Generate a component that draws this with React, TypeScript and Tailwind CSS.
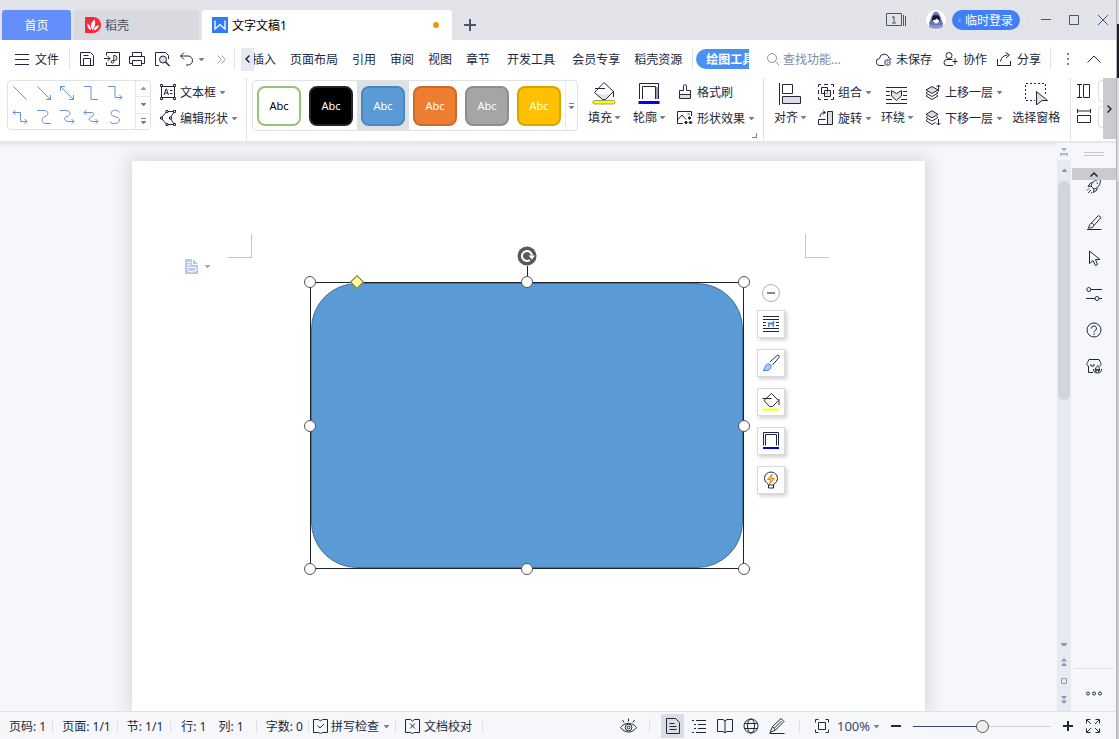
import React from "react";

type IconProps = { className?: string; box?: string; children: React.ReactNode };

function Icon({ className = "size-4", box = "0 0 16 16", children }: IconProps) {
  return (
    <svg
      viewBox={box}
      className={`shrink-0 ${className}`}
      fill="none"
      stroke="currentColor"
      strokeWidth="1"
      aria-hidden="true"
    >
      {children}
    </svg>
  );
}

function Caret({ className = "text-[#76819c]" }: { className?: string }) {
  return (
    <svg viewBox="0 0 5 3" className={`h-[3px] w-[5px] shrink-0 ${className}`} aria-hidden="true">
      <path d="M0 0h5v.6L3 3H2L0 .6z" fill="currentColor" />
    </svg>
  );
}

function Sep({ className }: { className: string }) {
  return <span className={`w-px shrink-0 bg-[#dfe1e6] ${className}`} />;
}

const icons = {
  save: (
    <Icon>
      <path d="M1.500 1.500h10l3 3v10h-13zM4.500 14.500v-7h7v7M4.500 4.500h5" />
    </Icon>
  ),
  exportPdf: (
    <Icon>
      <path d="M2.500 4.500v-3h13v13h-13v-3M0 7.500h6M3.500 5 6 7.500 3.500 10M9.500 4.500h1a2 2 0 0 1 0 5h-2a1.300 1.300 0 1 0 1.300 1.300V4.500" />
    </Icon>
  ),
  print: (
    <Icon>
      <path d="M3.500 5V1.500h9V5M3.500 12.500h-3v-7h15v7h-3M3.500 9.500h9v5h-9z" />
    </Icon>
  ),
  preview: (
    <Icon>
      <path d="M5 14.500H1.500v-13h10l3 3V8" />
      <circle cx="9" cy="8.500" r="3.500" fill="#dcdde6" />
      <path d="m11.500 11 4 4" strokeWidth="1.500" />
    </Icon>
  ),
  undo: (
    <Icon>
      <path d="M5 1.500 1.500 5 5 8.500M1.500 5H9a4.500 4.500 0 0 1 0 9H7" />
    </Icon>
  ),
  textBox: (
    <Icon>
      <path d="M2 2.500h12M2 13.500h12M1.500 2v12M14.500 2v12" />
      <path d="M.5.5h2v2h-2zM13.500.5h2v2h-2zM.5 13.500h2v2h-2zM13.500 13.500h2v2h-2z" fill="#fff" />
      <path d="m4 11 2-6h.5l2 6M5 9h3M10 6.500h2.500M10 9.500h2.500" />
    </Icon>
  ),
  editShape: (
    <Icon>
      <path d="M7 1.500h7.500L10 8l4.500 6.500H7L1 8z" />
      <path d="M6 .5h2v2H6zM13.500.5h2v2h-2zM.5 7h2v2h-2zM9.500 7h2v2h-2zM6 13.500h2v2H6zM13.500 13.500h2v2h-2z" fill="#fff" />
    </Icon>
  ),
  painter: (
    <Icon>
      <path d="M6.500 6.500v-5l1.500-1 1.500 1v5h4v4h-11v-4z" />
      <path d="M2.500 10.500h11v4h-11z" fill="#dcdde6" />
    </Icon>
  ),
  effects: (
    <Icon>
      <path d="M6 13.500H.5V1.500h14V6M.5 10 5 5l4 4.500M10.500 4h2" />
      <path d="M12.500 6.500 14 8l-1.500 1.500L11 8zM9 11l1.500 1.500L9 14l-1.500-1.500zM13.500 11l1.500 1.500-1.500 1.500-1.500-1.500z" fill="#2b3148" />
    </Icon>
  ),
  group: (
    <Icon>
      <path d="M.5 3V.5H3M6 .5h4M13 .5h2.500V3M15.500 6v4M15.500 13v2.500H13M10 15.500H6M3 15.500H.5V13M.5 10V6" />
      <path d="M3.500 3.500h6v6h-6z" />
      <path d="M6.500 6.500h6v6h-6z" fill="#dcdde6" fillOpacity=".6" />
    </Icon>
  ),
  rotate: (
    <Icon>
      <path d="M9.500 1.500h5v13h-5z" fill="#dcdde6" />
      <path d="M7.500 9.500h-7v5h9M2 7c0-3 2-4.500 5-4.500M5 .5l2.500 2L5 4.500" />
    </Icon>
  ),
  up: (
    <Icon>
      <path d="m7 2.500 6 3.500-6 3.500L1 6z" fill="#dcdde6" />
      <path d="M2.500 8 1 9l6 3.500L13 9l-1.500-1M2.500 11 1 12l6 3.500 6-3.500-1.500-1M13.500 7.500V1M11.500 3l2-2 2 2" />
    </Icon>
  ),
  down: (
    <Icon>
      <path d="m7 .8 6 3.500-6 3.500-6-3.500z" fill="#dcdde6" />
      <path d="M2.500 6.500 1 7.500l6 3.500 6-3.500-1.500-1M2.500 9.500 1 10.500l6 4 3.500-2M13.500 9v6M11.500 13l2 2 2-2" />
    </Icon>
  ),
  cloud: (
    <Icon>
      <path d="M8 14.500H4a3.500 3.500 0 0 1-.5-7 4.700 4.700 0 0 1 9.300-.5 3 3 0 0 1 2.400 2" />
      <circle cx="11.500" cy="11.500" r="3.500" fill="#8d93a8" stroke="none" />
      <path d="m10 10 3 3M13 10l-3 3" stroke="#fff" />
    </Icon>
  ),
  collab: (
    <Icon>
      <circle cx="6" cy="4.500" r="3" />
      <path d="M9.500 8.500H4a3 3 0 0 0 0 6h6M12 7.500v6M9.500 10.500h5" />
    </Icon>
  ),
  share: (
    <Icon>
      <path d="M.5 8v6.500h13V10M3.500 10.500c.5-4 3-6 7-6.500M8.500 1.500l4 2.500-3.500 3" />
    </Icon>
  ),
  spell: (
    <Icon>
      <path d="M1 1.500h4.500l2 1.500 2-1.500h5v13h-5l-2 1-2-1H.5v-13zM4.500 7.500 7 10l4-4" />
    </Icon>
  ),
  proof: (
    <Icon>
      <path d="M1 1.500h4.500l2 1.500 2-1.500h5v13h-5l-2 1-2-1H.5v-13zM5 5.500l5 5M10 5.500l-5 5" />
    </Icon>
  ),
  eye: (
    <Icon className="h-4 w-[17px]" box="0 0 17 16">
      <path d="M.5 9.500c4-5.500 12-5.500 16 0-4 6-12 6-16 0z" />
      <circle cx="8.500" cy="9.500" r="3.300" />
      <circle cx="8.500" cy="9.500" r="1.300" />
      <path d="M8.500.5v3M2.500 2 4 4.500M14.500 2 13 4.500" />
    </Icon>
  ),
  pageView: (
    <Icon>
      <path d="M1.500.5h9l4 4v11h-13zM4.500 5.500h5M4.500 8.500h7M4.500 11.500h7" />
    </Icon>
  ),
  outline: (
    <Icon>
      <path d="M1 2.500h2M5 2.500h10M3 6.500h2M7 6.500h8M3 10.500h2M7 10.500h8M1 14.500h2M5 14.500h10" />
    </Icon>
  ),
  book: (
    <Icon>
      <path d="M.5 1.500H6l2 1.500 2-1.500h5.500v12H10L8 15l-2-1.500H.5zM8 3v11" />
    </Icon>
  ),
  globe: (
    <Icon>
      <circle cx="8" cy="8" r="7" />
      <ellipse cx="8" cy="8" rx="3.500" ry="7" />
      <path d="M1.500 5.500h13M1.500 10.500h13" />
    </Icon>
  ),
  pen: (
    <Icon>
      <path d="M.5 15.500h15M1 14.500l2.500-6 8.500-8 3 3-8.500 8.500-5.500 2.500M3.500 8.500l3 3.500M5.500 10l7-7" />
    </Icon>
  ),
  fit: (
    <Icon>
      <path d="M1.500 4.500v-3h3M11.500 1.500h3v3M14.500 11.500v3h-3M4.500 14.500h-3v-3M4.500 4.500h7v7h-7z" />
    </Icon>
  ),
  full: (
    <Icon>
      <path d="M1.500 5.500v-4h4M2 2l4 4M10.500 1.500h4v4M14 2l-4 4M14.500 10.500v4h-4M14 14l-4-4M5.500 14.500h-4v-4M2 14l4-4" />
    </Icon>
  ),
};

const connectors = [
  "M1.500 1.500l13 13",
  "M1.500 1.500l13 13M14.500 10v4.500H10",
  "M1.500 1.500l13 13M14.500 10v4.500H10M1.500 6V1.500H6",
  "M1 1.500h7v13h7",
  "M1 1.500h7v11h7M12.500 10l2.500 2.500-2.500 2.500",
  "M1 3.500h7.500v9H15M12.500 10l2.500 2.500-2.500 2.500M3.500 1 1 3.500 3.500 6",
  "M1 1.500h7c5 0 5 5 1 6s-4 7 1 7h5",
  "M1 1.500h6c5 0 5 5 1 6s-3 5 2 5h5M12.500 10l2.500 2.500-2.500 2.500",
  "M1 3.500h7c4 0 3 3.500 0 4.500s-2 4.500 2 4.500h5M12.500 10l2.500 2.500-2.500 2.500M3.500 1 1 3.500 3.500 6",
  "M12.500 3.500C11 0 4 .5 4 4.500S12.500 7 12.500 11 5 16 2.500 12.500",
];

function ToolButton({ icon, label, caret = true }: { icon: React.ReactNode; label: string; caret?: boolean }) {
  return (
    <button className="flex h-[22px] items-center gap-1 whitespace-nowrap">
      {icon}
      <span>{label}</span>
      {caret && <Caret />}
    </button>
  );
}

function BigButton({ icon, label, caret = true, className }: { icon: React.ReactNode; label: string; caret?: boolean; className: string }) {
  return (
    <button className={`flex shrink-0 flex-col items-center gap-1 whitespace-nowrap pt-[3px] ${className}`}>
      {icon}
      <span className="flex items-center gap-[3px]">
        {label}
        {caret && <Caret />}
      </span>
    </button>
  );
}

function FillIcon({ className }: { className: string }) {
  return (
    <Icon className={className} box="0 0 24 24">
      <path d="m4 13 1.500 2.500 7 4 6-6z" fill="#e2e3ea" stroke="none" />
      <path d="M12 1.500 2.500 11.500l8 7h3l8-8zM3 7.500h10M21.500 10v6" />
      <rect x="1" y="19.500" width="22" height="3.500" rx="1.500" fill="#ff0" stroke="#8a8a5a" strokeWidth=".8" />
    </Icon>
  );
}

function OutlineIcon({ className }: { className: string }) {
  return (
    <Icon className={className} box="0 0 24 24">
      <path d="M2.500 18V2.500h19V18M5.500 18V5.500h13V18" />
      <path d="M20 6v12" stroke="#9a9eb0" strokeWidth="2" />
      <path d="M1.500 21.500h21" stroke="#00f" strokeWidth="3" />
    </Icon>
  );
}

const swatches = [
  { name: "绿色轮廓", style: "border-2 border-[#92c47a] bg-white text-black" },
  { name: "黑色填充", style: "border-2 border-[#242424] bg-black text-white" },
  { name: "蓝色填充", style: "border-2 border-[#4e86ba] bg-[#5b9bd5] text-white" },
  { name: "橙色填充", style: "border-2 border-[#cb6b2a] bg-[#ed7d31] text-white" },
  { name: "灰色填充", style: "border-2 border-[#8e8e8e] bg-[#a5a5a5] text-white" },
  { name: "金色填充", style: "border-2 border-[#d9a400] bg-[#ffc000] text-white" },
];

function TitleBar() {
  return (
    <header className="flex h-10 shrink-0 items-end bg-[#e2e3e8] pl-[2px] text-[#2b3148]">
      <button className="h-[30px] w-[69px] rounded-t-[3px] bg-[#638efb] text-white">首页</button>
      <button className="ml-[3px] flex h-[30px] w-[125px] items-center gap-1 rounded-t-[3px] bg-[#d9dadf] pl-[11px] text-[#444b60]">
        <svg viewBox="0 0 16 16" className="size-4" aria-hidden="true">
          <path d="M0 0h8a8 8 0 0 1 0 16H0z" fill="#fb2738" />
          <path d="M7.500 13C4.500 9 6.500 5 9.500 2.500c1.500 3.500.5 7.500-2 10.500zM6 13C3 12 2 9 2.500 6.500 5 8 6 10 6 13zM8.500 13.500c.5-3 2.500-5 5.500-5.500-.5 3-2.500 5-5.500 5.500z" fill="#fff" />
        </svg>
        稻壳
      </button>
      <button className="ml-[3px] flex h-[30px] w-[250px] items-center gap-1 rounded-t-[3px] bg-white pl-[10px] pr-[13px] text-black">
        <svg viewBox="0 0 16 16" className="size-4" aria-hidden="true">
          <path d="M0 0h16v16H0z" fill="#2f7df0" />
          <path d="M3 3.500v8.500l5-4.500 5 4.500V3.500" fill="none" stroke="#fff" strokeWidth="1.300" />
        </svg>
        文字文稿1
        <span className="ml-auto size-[6px] rounded-full bg-[#e89a0c]" />
      </button>
      <button aria-label="新建" className="ml-3 flex h-[30px] items-center text-[#4a5574]">
        <Icon className="size-3" box="0 0 12 12">
          <path d="M6 0v12M0 6h12" strokeWidth="2" />
        </Icon>
      </button>
      <div className="ml-auto flex h-10 items-center pr-2 text-[#4a5574]">
        <button aria-label="窗口列表">
          <Icon className="h-4 w-5" box="0 0 20 16">
            <path d="M.5 1.500h15v12H.5zM17.500 3v11M19.500 4v10" />
            <path d="M6 5.500 8 4.500v6.500M6 11h4" />
          </Icon>
        </button>
        <Sep className="ml-[9px] h-5 bg-[#c9cbd3]" />
        <svg viewBox="0 0 20 20" className="ml-[10px] size-5" aria-hidden="true">
          <circle cx="10" cy="10" r="10" fill="#fff" />
          <path d="M10 1.500c-4 1-4.500 6-7 12-.5 2.500 2.500 4.500 7 4.500s8-1.500 7-4.500c-2.500-6-3-11-7-12z" fill="#6878b5" />
          <path d="M3 14c2 2 12 2 14 0v3c-3 2.500-11 2.500-14 0z" fill="#8d9bd0" />
          <ellipse cx="10" cy="9" rx="3.800" ry="4" fill="#171a2c" />
          <path d="M7 10c1.500 0 3-.5 3.500-1.500L13 10.500c0 4-6 4-6-.5z" fill="#fff" />
        </svg>
        <button className="ml-[6px] flex h-5 w-[68px] items-center gap-1 rounded-full bg-[#417ff9] pl-[6px] text-white">
          <span className="size-[3px] rounded-full bg-[#84aafa]" />
          临时登录
        </button>
        <Sep className="ml-2 h-5 bg-[#c9cbd3]" />
        <button aria-label="最小化" className="ml-3">
          <Icon className="size-[10px]" box="0 0 10 10"><path d="M0 4.500h10" /></Icon>
        </button>
        <button aria-label="最大化" className="ml-[18px]">
          <Icon className="size-[10px]" box="0 0 10 10"><path d="M.5.5h9v9h-9z" /></Icon>
        </button>
        <button aria-label="关闭" className="ml-[19px]">
          <Icon className="size-[10px]" box="0 0 10 10"><path d="m0 0 10 10M10 0 0 10" /></Icon>
        </button>
      </div>
    </header>
  );
}

function MenuBar() {
  const tabs = ["插入", "页面布局", "引用", "审阅", "视图", "章节"];
  return (
    <div className="flex h-[38px] shrink-0 items-center bg-white pl-[15px]">
      <button className="flex items-center gap-[6px]">
        <Icon className="h-[11px] w-[14px]" box="0 0 14 11"><path d="M0 .5h14M0 5.500h14M0 10.500h14" /></Icon>
        文件
      </button>
      <Sep className="ml-[10px] h-[22px]" />
      <div className="ml-[9px] flex items-center gap-[9px]">
        <button aria-label="保存">{icons.save}</button>
        <button aria-label="输出为PDF">{icons.exportPdf}</button>
        <button aria-label="打印">{icons.print}</button>
        <button aria-label="打印预览">{icons.preview}</button>
        <button aria-label="撤销" className="flex items-center gap-1">{icons.undo}<Caret /></button>
      </div>
      <button aria-label="更多" className="ml-[13px] text-[#a3a6b0]">
        <Icon className="size-[9px]" box="0 0 9 9"><path d="m.5.5 4 4-4 4M4.500.5l4 4-4 4" /></Icon>
      </button>
      <Sep className="ml-2 h-[22px]" />
      <button aria-label="向左滚动" className="ml-[6px] flex h-[23px] w-[13px] shrink-0 items-center justify-center bg-[#e6e9ee]">
        <Icon className="h-2 w-[5px]" box="0 0 5 8"><path d="M4.500.5 1 4l3.500 3.500" strokeWidth="1.500" /></Icon>
      </button>
      <nav className="flex w-[495px] shrink-0 items-center overflow-hidden whitespace-nowrap">
        <div className="-ml-[2px] flex gap-[14px]">
          {tabs.map((t) => <button key={t}>{t}</button>)}
        </div>
        <div className="ml-[17px] flex gap-[17px]">
          <button>开发工具</button>
          <button>会员专享</button>
        </div>
        <button className="ml-[14px]">稻壳资源</button>
        <Sep className="ml-[10px] h-5" />
        <button className="ml-[3px] h-5 shrink-0 rounded-full bg-[#4a90f2] px-[10px] font-bold text-white">绘图工具</button>
      </nav>
      <label className="ml-[18px] flex items-center gap-1 text-[#8b93a8]">
        <Icon className="size-3" box="0 0 12 12">
          <circle cx="5" cy="5" r="4.500" />
          <path d="m8.500 8.500 3.500 3.500" />
        </Icon>
        <input aria-label="查找功能" placeholder="查找功能..." className="w-[72px] bg-transparent outline-none placeholder:text-[#8089a0]" />
      </label>
      <div className="ml-auto flex shrink-0 items-center pr-[15px]">
        <button className="flex items-center gap-1">{icons.cloud}未保存</button>
        <button className="ml-[11px] flex items-center gap-1">{icons.collab}协作</button>
        <button className="ml-[10px] flex items-center gap-1">{icons.share}分享</button>
        <Sep className="ml-[9px] h-5" />
        <button aria-label="更多选项" className="ml-4 flex flex-col gap-[3px]">
          <span className="size-[2px] bg-[#76819c]" />
          <span className="size-[2px] bg-[#76819c]" />
          <span className="size-[2px] bg-[#76819c]" />
        </button>
        <button aria-label="收起功能区" className="ml-[18px]">
          <Icon className="h-2 w-[14px]" box="0 0 14 8"><path d="m.5 7.500 6.500-6.500 6.500 6.500" /></Icon>
        </button>
      </div>
    </div>
  );
}

function Ribbon() {
  return (
    <div className="flex h-[65px] shrink-0 border-b-2 border-[#e6e7eb] bg-white pl-[7px]">
      <div className="mt-[2px] flex h-[50px] w-36 shrink-0 rounded-sm border border-[#dfe2e6]">
        <div className="grid w-[120px] grid-cols-5 grid-rows-2 pr-px">
          {connectors.map((d) => (
            <button key={d} aria-label="连接线" className="flex items-center justify-center text-[#6a8fd4]">
              <Icon><path d={d} /></Icon>
            </button>
          ))}
        </div>
        <div className="ml-auto flex w-[15px] flex-col divide-y divide-[#e6e8ec] border-l border-[#e6e8ec]">
          <button aria-label="上一行" className="flex flex-1 items-center justify-center"><Caret className="rotate-180 text-[#8f97ab]" /></button>
          <button aria-label="下一行" className="flex flex-1 items-center justify-center"><Caret /></button>
          <button aria-label="更多形状" className="flex flex-1 flex-col items-center justify-center gap-[2px]">
            <span className="h-px w-[5px] bg-[#76819c]" /><Caret />
          </button>
        </div>
      </div>
      <div className="ml-[9px] flex shrink-0 flex-col items-start gap-1 pt-[3px]">
        <ToolButton icon={icons.textBox} label="文本框" />
        <ToolButton icon={icons.editShape} label="编辑形状" />
      </div>
      <Sep className="ml-[9px] h-[62px]" />
      <div className="ml-[5px] mt-[2px] flex h-[51px] shrink-0 rounded-sm border border-[#dfe2e6]">
        {swatches.map((s, i) => (
          <div key={s.name} className={`flex w-[52px] items-center justify-center ${i === 2 ? "bg-[#dce1e6]" : ""}`}>
            <button aria-label={s.name} className={`h-10 w-11 rounded-lg text-[11px] ${s.style}`}>Abc</button>
          </div>
        ))}
        <button aria-label="更多样式" className="flex w-3 flex-col items-center justify-center gap-[2px] border-l border-[#e6e8ec]">
          <span className="h-px w-[5px] bg-[#76819c]" /><Caret />
        </button>
      </div>
      <BigButton className="ml-[10px]" icon={<FillIcon className="size-6" />} label="填充" />
      <BigButton className="ml-[13px]" icon={<OutlineIcon className="size-6" />} label="轮廓" />
      <div className="relative ml-3 flex shrink-0 flex-col items-start gap-1 pt-[3px]">
        <ToolButton icon={icons.painter} label="格式刷" caret={false} />
        <ToolButton icon={icons.effects} label="形状效果" />
        <span className="absolute -right-[3px] top-[55px] size-[5px] border-b border-r border-[#76819c]" />
      </div>
      <Sep className="ml-[9px] h-[62px]" />
      <BigButton
        className="ml-[10px]"
        label="对齐"
        icon={
          <Icon className="size-6" box="0 0 24 24">
            <path d="M1.500 2v22M4.500 3.500h10v9h-10z" />
            <path d="M4.500 15.500h18v7h-18z" fill="#dcdde6" />
          </Icon>
        }
      />
      <div className="ml-3 flex shrink-0 flex-col items-start gap-1 pt-[3px]">
        <ToolButton icon={icons.group} label="组合" />
        <ToolButton icon={icons.rotate} label="旋转" />
      </div>
      <BigButton
        className="ml-[10px]"
        label="环绕"
        icon={
          <Icon className="size-6" box="0 0 24 24">
            <path d="M1 6.500h21M1 10.500h4M18 10.500h4M1 14.500h4M18 14.500h4M1 18.500h6M16 18.500h6M1 22.500h21" />
            <path d="m6.500 9.500 5 3 5-3v5.500l-5 4.500-5-4.500z" fill="#e2e3ea" />
          </Icon>
        }
      />
      <div className="ml-3 flex shrink-0 flex-col items-start gap-1 pt-[3px]">
        <ToolButton icon={icons.up} label="上移一层" />
        <ToolButton icon={icons.down} label="下移一层" />
      </div>
      <BigButton
        className="ml-[10px]"
        label="选择窗格"
        caret={false}
        icon={
          <Icon className="size-6" box="0 0 24 24">
            <path d="M21.500 13V2.500h-20v17H11" strokeDasharray="2 2" />
            <path d="m12.500 10.500 11 9H18l-5.500 4.500z" fill="#dcdde6" />
          </Icon>
        }
      />
      <Sep className="ml-[10px] h-[62px]" />
      <div className="ml-[6px] flex shrink-0 flex-col gap-[11px] pt-[6px]">
        <Icon className="size-[14px]" box="0 0 14 14"><path d="M0 .5h5M0 13.500h5M2.500.5v13M6.500.5h6v13h-6z" /></Icon>
        <Icon className="size-[14px]" box="0 0 14 14"><path d="M.5 0v4M13.500 0v4M.5 2h13M.5 6.500h13v7H.5z" /></Icon>
      </div>
      <div className="ml-[7px] flex w-[5px] shrink-0 flex-col gap-1 pt-[2px]">
        <span className="h-[22px] rounded-l-sm border-y border-l border-[#dcdfe4]" />
        <span className="h-[22px] rounded-l-sm border-y border-l border-[#dcdfe4]" />
      </div>
      <button aria-label="向右滚动" className="ml-auto flex h-[61px] w-[13px] shrink-0 items-center justify-center bg-[#cacbd1]">
        <Icon className="h-2 w-[5px]" box="0 0 5 8"><path d="M.5.5 4 4 .5 7.500" strokeWidth="1.500" /></Icon>
      </button>
    </div>
  );
}

const handles = [
  "left-0 top-0", "left-1/2 top-0", "left-full top-0",
  "left-0 top-1/2", "left-full top-1/2",
  "left-0 top-full", "left-1/2 top-full", "left-full top-full",
];

const floating = [
  {
    name: "布局选项",
    icon: (
      <Icon className="size-[18px]" box="0 0 18 18">
        <path d="M1 1.500h16M1 4.500h16M1 7.500h3M14 7.500h3M1 10.500h3M14 10.500h3M1 13.500h16M1 16.500h16" />
        <path d="M5 7.500h5l2-2v1l1 .5-1 1v4h-1.500v-2.500h-3V12H6V8.500z" fill="#4a86e0" stroke="none" />
      </Icon>
    ),
  },
  {
    name: "形状样式",
    icon: (
      <Icon className="size-[18px]" box="0 0 18 18">
        <path d="M8 8 15 1.500c1-1 3 .5 2 2L10.500 11" />
        <path d="M1 16.500c2-1 1.500-4 3.500-6 1.500-1 2.500-.5 3.500.5s1.500 2 .5 3.500c-1.500 2-4.500 2.500-7.500 2z" fill="#a9cbf5" stroke="#3f7fe0" />
        <path d="M7 9.500 9.500 12" stroke="#3f7fe0" />
      </Icon>
    ),
  },
  {
    name: "形状填充",
    icon: (
      <Icon className="size-[18px]" box="0 0 18 18">
        <path d="M9.500.5 2 7.500l5.500 6h3l6-6zM.5 5.500h9M17 6v6" />
        <path d="M.5 16.500h17" stroke="#ff0" strokeWidth="2" />
      </Icon>
    ),
  },
  {
    name: "形状轮廓",
    icon: (
      <Icon className="size-[18px]" box="0 0 18 18">
        <path d="M1.500 13.500V.5h15v13M3.500 13.500v-11h11v11" />
        <path d="M1 16h16" stroke="#00f" strokeWidth="2" />
      </Icon>
    ),
  },
  {
    name: "智能提示",
    icon: (
      <Icon className="size-[18px]" box="0 0 18 18">
        <path d="M6.500 14c0-1.500-4-2.500-4-6.500a6.500 6.500 0 0 1 13 0c0 4-4 5-4 6.500zM6.500 14v3h5v-3" />
        <path d="M10 3 5.500 8.500h3L7.500 13 12.500 7.500h-3z" fill="#ffc04a" stroke="#e38a1b" />
      </Icon>
    ),
  },
];

function Document() {
  return (
    <main className="relative min-w-0 flex-1 overflow-hidden bg-[#f5f7fa] pt-[18px] shadow-[inset_0_4px_4px_-3px_#dcdde1]">
      <div className="relative mx-auto h-full w-[793px] bg-white shadow-[0_0_16px_4px_#d9dadd]">
        <span className="absolute left-24 top-[73px] size-6 border-b border-r border-[#c6c6c6]" />
        <span className="absolute left-[673px] top-[73px] size-6 border-b border-l border-[#c6c6c6]" />
        <button aria-label="粘贴选项" className="absolute left-[53px] top-[98px] flex items-center gap-[7px]">
          <svg viewBox="0 0 13 15" className="h-[15px] w-[13px]" aria-hidden="true">
            <path d="M0 0h8l5 5v10H0z" fill="#b8cae8" />
            <path d="M7.500 0v5.500H13M2 3.500h4M2 6h4M2 8.500h9M2 11h2v1.500h3v1M11 9v3H7" fill="none" stroke="#fff" />
          </svg>
          <Caret className="text-[#aaa]" />
        </button>
        <div className="absolute left-[178px] top-[121px] h-[287px] w-[434px]">
          <div className="h-full border border-[#222]">
            <div className="h-full rounded-[46px] border border-[#41719c] bg-[#5b9bd5]" />
          </div>
          <span className="absolute -top-4 left-1/2 h-4 w-px bg-[#222]" />
          <svg viewBox="0 0 20 20" className="absolute -top-9 left-1/2 size-5 -translate-x-1/2" aria-hidden="true">
            <circle cx="10" cy="10" r="9.500" fill="#595959" />
            <path d="M13 14a5 5 0 1 1 2-4.500" fill="none" stroke="#fff" strokeWidth="2" />
            <path d="M11.500 9.500H18l-3 4z" fill="#fff" />
          </svg>
          {handles.map((h) => (
            <span key={h} className={`absolute size-3 -translate-x-1/2 -translate-y-1/2 rounded-full border border-[#555] bg-white ${h}`} />
          ))}
          <span className="absolute left-[47px] top-0 size-[10px] -translate-x-1/2 -translate-y-1/2 rotate-45 border border-[#666640] bg-[#ffff99]" />
        </div>
        <div className="absolute left-[625px] top-[123px] flex flex-col items-center gap-[11px]">
          <button aria-label="收起" className="mb-[-3px] flex size-[18px] items-center justify-center rounded-full border border-[#b0b0b0] bg-white">
            <span className="h-[2px] w-2 bg-[#888]" />
          </button>
          {floating.map((f) => (
            <button key={f.name} aria-label={f.name} className="flex size-7 items-center justify-center border border-[#d6d8de] bg-white shadow-[2px_2px_4px_#cfcfcf]">
              {f.icon}
            </button>
          ))}
        </div>
      </div>
    </main>
  );
}

function ScrollBar() {
  return (
    <div className="flex w-[14px] shrink-0 flex-col items-center text-[#8a97b8]">
      <div className="flex h-[17px] items-center">
        <Icon className="size-2" box="0 0 8 8"><path d="M1 0h6L4 3.500zM0 5h8v3H6.500V6.500h-2V8h-1V6.500h-2V8H0z" fill="#a9b1c8" stroke="none" /></Icon>
      </div>
      <div className="flex w-full flex-1 flex-col items-center bg-[#e8eaf1] pb-[7px]">
        <button aria-label="向上滚动" className="flex h-[21px] items-center"><Caret className="rotate-180 text-[#8a97b8]" /></button>
        <div className="h-[219px] w-3 rounded-full bg-[#d2d5de]" />
        <button aria-label="向下滚动" className="mb-3 mt-auto"><Icon className="h-[3px] w-[6px]" box="0 0 6 3"><path d="M0 0h6v1L4 3H2L0 1z" fill="currentColor" stroke="none" /></Icon></button>
        <button aria-label="上一页" className="mb-3">
          <Icon className="h-2 w-[6px]" box="0 0 6 8"><path d="m3 0 3 3.500H0zM3 4.500 6 8H0z" fill="currentColor" stroke="none" /></Icon>
        </button>
        <button aria-label="选择浏览对象" className="mb-3 size-[6px] rounded-[1px] border border-[#8a97b8]" />
        <button aria-label="下一页">
          <Icon className="h-2 w-[6px]" box="0 0 6 8"><path d="m3 3.500 3-3.500H0zM3 8l3-3.500H0z" fill="currentColor" stroke="none" /></Icon>
        </button>
      </div>
    </div>
  );
}

const sideTools = [
  { name: "快捷工具", d: "M5 8c1-4 4-6.500 9.500-6.500C14.500 7 12 10 8 11zM5 8l-3 .5L4.500 5l2-.5M8 11l-.5 3.500L11 12v-2M3 10.500l-2 2M5 12l-3 3M6 14l-1 1.500M10.500 4.500l1.500 1.500" },
  { name: "样式", d: "M1 15.500h14.500M2 14c1.500-1 1-3 2.500-4.500 2-1 4 1 3 3-1.500 1.500-3.500 1.500-5.500 1.500zM5.500 9l7-7.500 2.500 2L8 11.500" },
  { name: "选择", d: "M3.500 1v12.500l3.500-3 2.500 5 2-1-2-5H14z" },
  { name: "属性", d: "M5 3.500h11M0 12.500h9M13 12.500h3M.8 3.500a2 2 0 1 0 4 0 2 2 0 1 0-4 0M9 12.500a2 2 0 1 0 4 0 2 2 0 1 0-4 0" },
  { name: "帮助", d: "M1 8a7 7 0 1 0 14 0A7 7 0 1 0 1 8M5.500 6.500a2.500 2.500 0 1 1 3.500 2.200c-.7.300-1 .8-1 1.800M8 11.500v1.500" },
  { name: "稻壳商城", d: "M7 14.500H2.500V8M2.500 8C.5 8 .5 5.500 1.500 4.500L3 1.500h10l1.500 3c1 1 .5 3.500-1 3.500M5 6v2h3V6M11.500 15c-4-2-2-5.500.5-7.500 2 2.500 1.500 5-.5 7.500zM11 15c-2.500 0-3.500-1.500-3.500-4M12 15c2.500 0 3.500-1.500 3.500-4M9 13l5-2M9 10.500l5 2.500" },
];

function SidePanel() {
  return (
    <aside className="ml-px flex w-11 shrink-0 flex-col bg-[#f5f7fa]">
      <div className="flex h-[25px] flex-col items-center justify-center gap-[2px] pb-1">
        <span className="h-px w-5 bg-[#c5c8cf]" />
        <span className="h-px w-5 bg-[#c5c8cf]" />
      </div>
      <div className="relative flex flex-col">
        {sideTools.map((t) => (
          <button key={t.name} aria-label={t.name} className="flex h-9 items-center justify-center">
            <Icon><path d={t.d} /></Icon>
          </button>
        ))}
        <button aria-label="向上" className="absolute inset-x-0 top-0 flex h-3 items-center justify-center bg-[#cacbd1]">
          <Icon className="h-[5px] w-2" box="0 0 8 5"><path d="M.5 4.500 4 1l3.500 3.500" strokeWidth="1.500" /></Icon>
        </button>
      </div>
      <div className="mx-[2px] mt-auto flex h-[43px] items-center justify-center border-t border-[#dfe1e6] pt-[6px]">
        <button aria-label="更多工具">
          <Icon className="h-[5px] w-4" box="0 0 16 5">
            <circle cx="2" cy="2.500" r="1.500" /><circle cx="8" cy="2.500" r="1.500" /><circle cx="14" cy="2.500" r="1.500" />
          </Icon>
        </button>
      </div>
    </aside>
  );
}

function StatusBar() {
  return (
    <footer className="flex h-7 shrink-0 items-center whitespace-nowrap border-t border-[#dfe1e6] bg-[#f5f7fa] pl-[9px] pr-[15px] pt-px">
      <span>页码: 1</span>
      <Sep className="ml-[6px] h-[14px]" />
      <span className="ml-[9px]">页面: 1/1</span>
      <Sep className="ml-[6px] h-[14px]" />
      <span className="ml-[9px]">节: 1/1</span>
      <Sep className="ml-[7px] h-[14px]" />
      <span className="ml-[10px]">行: 1</span>
      <span className="ml-3">列: 1</span>
      <Sep className="ml-3 h-[14px]" />
      <span className="ml-[9px]">字数: 0</span>
      <Sep className="ml-[5px] h-[14px]" />
      <button className="ml-1 flex items-center gap-[2px]">{icons.spell}拼写检查<span className="w-px" /><Caret /></button>
      <Sep className="ml-[6px] h-[14px]" />
      <button className="ml-[9px] flex items-center gap-[3px]">{icons.proof}文档校对</button>
      <Sep className="ml-[10px] h-[14px]" />
      <div className="ml-auto flex items-center">
        <button aria-label="护眼模式">{icons.eye}</button>
        <Sep className="ml-3 h-[14px]" />
        <button aria-label="页面视图" className="ml-[11px] flex h-6 w-[23px] items-center justify-center bg-[#d9dde5]">{icons.pageView}</button>
        <div className="ml-[7px] flex gap-[10px]">
          <button aria-label="大纲">{icons.outline}</button>
          <button aria-label="阅读版式">{icons.book}</button>
          <button aria-label="Web版式">{icons.globe}</button>
          <button aria-label="写作模式">{icons.pen}</button>
        </div>
        <Sep className="ml-[14px] h-[14px]" />
        <button aria-label="最佳显示比例" className="ml-[14px]">{icons.fit}</button>
        <button className="ml-[7px] flex items-center gap-[5px] text-[#3d4868]"><span className="w-8 text-[13px]">100%</span><Caret /></button>
        <button aria-label="缩小" className="ml-3"><Icon className="size-[10px]" box="0 0 10 10"><path d="M0 5h10" strokeWidth="2" /></Icon></button>
        <input
          type="range"
          aria-label="显示比例"
          min="0"
          max="200"
          defaultValue="100"
          className="ml-3 h-4 w-[138px] appearance-none bg-transparent [&::-webkit-slider-runnable-track]:h-px [&::-webkit-slider-runnable-track]:bg-linear-to-r [&::-webkit-slider-runnable-track]:from-[#3d4868] [&::-webkit-slider-runnable-track]:from-50% [&::-webkit-slider-runnable-track]:to-[#cfd1d6] [&::-webkit-slider-runnable-track]:to-50% [&::-webkit-slider-thumb]:-mt-[6px] [&::-webkit-slider-thumb]:size-[13px] [&::-webkit-slider-thumb]:appearance-none [&::-webkit-slider-thumb]:rounded-full [&::-webkit-slider-thumb]:border [&::-webkit-slider-thumb]:border-[#555] [&::-webkit-slider-thumb]:bg-[#eeeeee]"
        />
        <button aria-label="放大" className="ml-3"><Icon className="size-[10px]" box="0 0 10 10"><path d="M0 5h10M5 0v10" strokeWidth="2" /></Icon></button>
        <button aria-label="全屏显示" className="ml-3">{icons.full}</button>
      </div>
    </footer>
  );
}

export default function App() {
  return (
    <div className="flex h-screen overflow-hidden bg-[#f5f7fa] font-['Noto_Sans','Noto_Sans_CJK_SC',sans-serif] text-xs/[17px] text-[#22283a]">
      <div className="flex min-w-0 flex-1 flex-col">
        <TitleBar />
        <MenuBar />
        <Ribbon />
        <div className="flex min-h-0 flex-1">
          <Document />
          <ScrollBar />
          <SidePanel />
        </div>
        <StatusBar />
      </div>
      <div className="flex w-[3px] shrink-0 flex-col border-l border-[#b5b5b8] bg-[#cbcbcb]">
        <span className="h-6 bg-[#d8d8d8]" />
        <span className="h-[54px] bg-[#1c1c26]" />
        <span className="h-[104px] bg-[#dcdcdc]" />
      </div>
    </div>
  );
}
